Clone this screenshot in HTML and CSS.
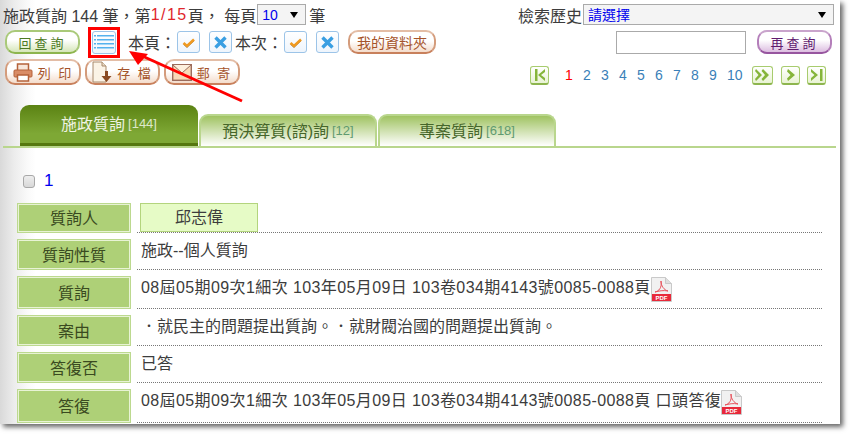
FILE: index.html
```html
<!DOCTYPE html>
<html lang="zh-Hant">
<head>
<meta charset="utf-8">
<title>施政質詢</title>
<link rel="stylesheet" href="styles.css">
</head>
<body>
<div class="frame">
  <div class="tool-row first">
    <div class="summary">施政質詢 144 筆<span>，</span>第<span class="red">1/15</span>頁<span>，</span> 每頁<span class="select-wrap per-page"><select><option>10</option></select></span>筆</div>
    <div class="history">檢索歷史<span class="select-wrap hist"><select><option>請選擇</option></select></span></div>
  </div>

  <div class="tool-row second">
    <div class="group">
      <button class="btn green w75">回查詢</button>
      <span class="marked">
        <span class="sq list">
          <svg width="20" height="16" viewBox="0 0 20 16"><g fill="#55b2ee"><rect x="0" y="1" width="2" height="1.500"/><rect x="0" y="5" width="2" height="1.500"/><rect x="0" y="9" width="2" height="1.500"/><rect x="0" y="13" width="2" height="1.500"/><rect x="3" y="1" width="17" height="1.500"/><rect x="3" y="5" width="17" height="1.500"/><rect x="3" y="9" width="17" height="1.500"/><rect x="3" y="13" width="17" height="1.500"/></g></svg>
        </span>
      </span>
      <span class="lbl page-lbl">本頁：</span>
      <span class="sq small"><svg width="15" height="13" viewBox="0 0 15 13"><path d="M2.500 7l3.500 3L13 3.500" fill="none" stroke="#8f8f8f" stroke-width="1" transform="translate(0 1.500)"/><path d="M2.500 7l3.500 3L13 3.500" fill="none" stroke="#f09a20" stroke-width="2.600"/></svg></span>
      <span class="sq small gap9"><svg width="15" height="15" viewBox="0 0 15 15"><path d="M2.500 2.500l10 10M12.500 2.500l-10 10" fill="none" stroke="#3a9fe2" stroke-width="3.400"/></svg></span>
      <span class="lbl time-lbl">本次：</span>
      <span class="sq small"><svg width="15" height="13" viewBox="0 0 15 13"><path d="M2.500 7l3.500 3L13 3.500" fill="none" stroke="#8f8f8f" stroke-width="1" transform="translate(0 1.500)"/><path d="M2.500 7l3.500 3L13 3.500" fill="none" stroke="#f09a20" stroke-width="2.600"/></svg></span>
      <span class="sq small gap9"><svg width="15" height="15" viewBox="0 0 15 15"><path d="M2.500 2.500l10 10M12.500 2.500l-10 10" fill="none" stroke="#3a9fe2" stroke-width="3.400"/></svg></span>
      <button class="btn brown folder">我的資料夾</button>
    </div>
    <div class="group">
      <input class="query" type="text">
      <button class="btn purple w75 requery">再查詢</button>
    </div>
  </div>

  <div class="tool-row third">
    <div class="group">
      <button class="btn brown tall w76"><svg width="20" height="19" viewBox="0 0 20 19"><rect x="4.500" y="1" width="11" height="7" fill="#f7e6da" stroke="#b5623a" stroke-width="1.500"/><rect x="1" y="7" width="18" height="7" rx="1" fill="#d98c66" stroke="#b5623a"/><rect x="4.500" y="12" width="11" height="6" fill="#fff" stroke="#b5623a" stroke-width="1.500"/></svg>列 印</button>
      <button class="btn brown tall w75 ml4"><svg width="20" height="22" viewBox="0 0 20 22"><path d="M1 1h9l4 4v16H1z" fill="#fbf3e6" stroke="#a88a6c"/><path d="M10 1v4h4" fill="#eadcc8" stroke="#a88a6c"/><path d="M13 10h3v5h3.500l-5 6-5-6H13z" fill="#8a4a22"/></svg>存 檔</button>
      <button class="btn brown tall w76 ml4"><svg width="20" height="17" viewBox="0 0 20 17"><rect x=".7" y=".7" width="18.600" height="15.600" fill="#f8d9b8" stroke="#9c6c5c" stroke-width="1.400"/><path d="M1 1l9 8 9-8" fill="#fdf0dd" stroke="#9c6c5c"/></svg>郵 寄</button>
    </div>
    <nav class="pager">
      <span class="pg first-pg"><svg width="13" height="12" viewBox="0 0 13 12"><path d="M2 0h2.500v12H2zM12 0v3L8 6l4 3v3L5 6z" fill="#86b53a"/></svg></span>
      <span class="nums"><a class="cur">1</a><a>2</a><a>3</a><a>4</a><a>5</a><a>6</a><a>7</a><a>8</a><a>9</a><a>10</a></span>
      <span class="pg wide"><svg width="15" height="12" viewBox="0 0 15 12"><path d="M1 0l6 6-6 6-1-2 3.500-4L0 2zM8 0l6 6-6 6-1.500-2L10 6 6.500 2z" fill="#86b53a"/></svg></span>
      <span class="pg ml8"><svg width="10" height="12" viewBox="0 0 10 12"><path d="M2 0l7 6-7 6-1-2.500L4.500 6 1 2.500z" fill="#86b53a"/></svg></span>
      <span class="pg ml7"><svg width="14" height="12" viewBox="0 0 14 12"><path d="M1 0l7 6-7 6V9l3.500-3L1 3zM10 0h2.500v12H10z" fill="#86b53a"/></svg></span>
    </nav>
  </div>

  <div class="tabs">
    <div class="tab active">施政質詢 <span class="count">[144]</span></div>
    <div class="tab">預決算質(諮)詢 <span class="count">[12]</span></div>
    <div class="tab">專案質詢 <span class="count">[618]</span></div>
  </div>

  <div class="record-head">
    <input type="checkbox"><a class="rec-no">1</a>
  </div>

  <div class="record">
    <div class="row h30"><div class="key">質詢人</div><div class="val"><span class="name">邱志偉</span></div></div>
    <div class="row"><div class="key">質詢性質</div><div class="val">施政--個人質詢</div></div>
    <div class="row h33"><div class="key">質詢</div><div class="val spaced">08屆05期09次1細次 103年05月09日 103卷034期4143號0085-0088頁<svg class="pdf" width="21" height="25" viewBox="0 0 21 25"><path d="M.5.5h14l6 6v18H.5z" fill="#f1f1f1" stroke="#c9c9c9"/><path d="M14.500.5v6h6" fill="#dedede" stroke="#c9c9c9"/><path d="M4 15c4-1 7-4 6-11 0 5 3 9 7 10-5-1-9 0-13 1z" fill="none" stroke="#e8505a"/><rect x="1" y="17" width="19" height="7" fill="#e8293a"/><text x="10.500" y="23" class="pdf-text">PDF</text></svg></div></div>
    <div class="row"><div class="key">案由</div><div class="val">．就民主的問題提出質詢。．就財閥治國的問題提出質詢。</div></div>
    <div class="row"><div class="key">答復否</div><div class="val">已答</div></div>
    <div class="row h34"><div class="key">答復</div><div class="val spaced">08屆05期09次1細次 103年05月09日 103卷034期4143號0085-0088頁 口頭答復<svg class="pdf" width="21" height="25" viewBox="0 0 21 25"><path d="M.5.5h14l6 6v18H.5z" fill="#f1f1f1" stroke="#c9c9c9"/><path d="M14.500.5v6h6" fill="#dedede" stroke="#c9c9c9"/><path d="M4 15c4-1 7-4 6-11 0 5 3 9 7 10-5-1-9 0-13 1z" fill="none" stroke="#e8505a"/><rect x="1" y="17" width="19" height="7" fill="#e8293a"/><text x="10.500" y="23" class="pdf-text">PDF</text></svg></div></div>
  </div>

  <svg class="arrow" width="130" height="60" viewBox="0 0 130 60"><path d="M121 54L19 8" stroke="#f00" stroke-width="3"/><path d="M8 4l19 3-10 11z" fill="#f00"/></svg>
</div>
</body>
</html>
```

FILE: styles.css
```css
* { box-sizing: border-box; }
html, body { margin: 0; padding: 0; background: #fff; }
body {
  width: 850px;
  height: 435px;
  overflow: hidden;
  font-family: "Liberation Sans", "Noto Sans CJK TC", sans-serif;
  font-size: 16px;
  color: #3c3c3c;
}
.frame {
  position: relative;
  width: 840px;
  height: 424px;
  padding-top: 4px;
  background: linear-gradient(to right, #d9d9d9 0, #ececec 14px, #fafafa 28px, #fff 36px);
  box-shadow: 3px 3px 5px #666;
}
.tool-row { display: flex; justify-content: space-between; }
.group { display: flex; align-items: center; }
.first { height: 21px; align-items: center; padding: 0 6px 0 3px; }
.second { height: 24px; margin-top: 5px; padding: 0 8px 0 5px; }
.third { height: 26px; margin-top: 5px; padding: 0 14px 0 5px; align-items: flex-end; }
.summary, .history { display: flex; align-items: center; white-space: pre; }
.red { color: #e0262c; letter-spacing: 1.5px; }
.select-wrap { position: relative; display: block; height: 21px; }
.select-wrap::after {
  content: "";
  position: absolute;
  top: 8px;
  right: 8px;
  border-left: 4px solid transparent;
  border-right: 4px solid transparent;
  border-top: 6px solid #000;
}
.select-wrap select {
  display: block;
  width: 100%;
  height: 100%;
  padding: 0 0 0 4px;
  appearance: none;
  border: 1px solid #aaa;
  border-radius: 0;
  background: #f4f4f4;
  color: #00e;
  font: 14px "Liberation Sans", "Noto Sans CJK TC", sans-serif;
}
.per-page { width: 49px; margin: 0 3px 0 1px; }
.hist { width: 251px; margin-left: 1px; }
.btn {
  display: flex;
  align-items: center;
  justify-content: center;
  gap: 5px;
  height: 24px;
  padding: 0;
  border-radius: 10px;
  border: 2px solid;
  font: 13px "Liberation Sans", "Noto Sans CJK TC", sans-serif;
  letter-spacing: 3px;
}
.green { border-color: #a9c979 #a9c979 #8db54e; background: linear-gradient(#fff 40%, #d5e6b8); color: #4d7a24; }
.brown { border-color: #e3bda6 #d49c7c #c8805c; background: linear-gradient(#fff 45%, #f4dccb); color: #a5532a; }
.purple { border-color: #c9a4cc #b47fba #97559f; background: linear-gradient(#fff 40%, #dcbde0); color: #5f1a6e; }
.w75 { width: 75px; }
.w76 { width: 76px; }
.ml4 { margin-left: 4px; }
.tall { height: 26px; letter-spacing: 2px; }
.folder { width: 88px; margin-left: 9px; letter-spacing: 0; font-size: 14px; }
.requery { margin-left: 11px; }
.query { width: 130px; height: 23px; border: 1px solid #aaa; background: #fff; }
.marked {
  display: flex;
  align-items: center;
  justify-content: center;
  width: 32px;
  height: 31px;
  margin: 0 8px;
  border: 3px solid #f00;
}
.sq {
  display: flex;
  align-items: center;
  justify-content: center;
  width: 23px;
  height: 22px;
  border: 1px solid #9cc4e8;
  border-radius: 3px;
  background: linear-gradient(#fff, #eef5fc);
}
.list { width: 24px; height: 23px; flex: none; }
.gap9 { margin-left: 9px; }
.lbl { white-space: nowrap; }
.page-lbl { width: 49px; }
.time-lbl { width: 49px; margin-left: 3px; }
.pager { display: flex; align-items: center; height: 19px; }
.pg {
  display: flex;
  align-items: center;
  justify-content: center;
  width: 19px;
  height: 19px;
  border: 1px solid #a8cc6e;
  border-bottom: 2px solid #8db54e;
  border-radius: 3px;
  background: linear-gradient(#fff, #e9f3d4);
}
.wide { width: 21px; }
.ml8 { margin-left: 8px; }
.ml7 { margin-left: 7px; }
.nums { display: flex; width: 203px; padding-left: 16px; font-size: 14px; line-height: 17px; }
.nums a { width: 18px; color: #3a7fb8; }
.nums .cur { color: #f00; }
.tabs {
  display: flex;
  align-items: flex-end;
  height: 43px;
  margin: 20px 4px 0 3px;
  padding-left: 17px;
  border-bottom: 2px solid #b9d68d;
}
.tab {
  display: flex;
  align-items: center;
  justify-content: center;
  gap: 3px;
  width: 178px;
  height: 32px;
  margin-left: 1px;
  padding-bottom: 2px;
  border: 2px solid #b9d68d;
  border-bottom: 0;
  border-radius: 9px 9px 0 0;
  background: linear-gradient(#a0c362, #fff);
  color: #46662a;
  font-size: 16px;
}
.tab .count { font-size: 13px; color: #5f9a70; }
.tab.active {
  height: 41px;
  margin-left: 0;
  border: 0;
  border-bottom: 3px solid #55780f;
  background: linear-gradient(#5b8213, #7ea835 75%);
  color: #eef3e2;
}
.tab.active .count { color: #dde8c8; }
.record-head {
  display: flex;
  align-items: center;
  height: 18px;
  margin-top: 24px;
  padding-left: 23px;
}
.record-head input {
  appearance: none;
  width: 12px;
  height: 13px;
  margin: 0;
  border: 1px solid #a8a8a8;
  border-radius: 3px;
  background: linear-gradient(#eee, #d8d8d8);
}
.rec-no { margin-left: 9px; color: #00e; font-size: 17px; }
.record { margin: 13px 0 0 17px; width: 805px; display: flex; flex-direction: column; gap: 6px; }
.row { display: flex; height: 31px; }
.h30 { height: 30px; }
.h33 { height: 33px; }
.h34 { height: 34px; }
.key {
  display: flex;
  align-items: center;
  justify-content: center;
  width: 114px;
  flex: none;
  padding-bottom: 2px;
  border: 1px solid #bcd98f;
  box-shadow: inset 0 0 0 1px #e8f3d5;
  background: #aed077;
  color: #3a4a20;
  font-size: 16px;
}
.val {
  display: flex;
  align-items: flex-start;
  flex: 1;
  margin-left: 6px;
  padding: 2px 0 0 4px;
  border-bottom: 1px dotted #777;
  font-size: 16px;
  line-height: 20px;
  white-space: pre;
}
.spaced { letter-spacing: .4px; }
.name {
  display: flex;
  align-items: center;
  justify-content: center;
  width: 118px;
  height: 29px;
  margin: -2px 0 0 -1px;
  border: 1px solid #b3d47d;
  background: #e6fbc6;
}
.pdf { flex: none; margin-top: -1px; }
.pdf-text { font: bold 6px "Liberation Sans", sans-serif; fill: #fff; text-anchor: middle; letter-spacing: 0; }
.arrow { position: absolute; left: 121px; top: 47px; pointer-events: none; }
```
